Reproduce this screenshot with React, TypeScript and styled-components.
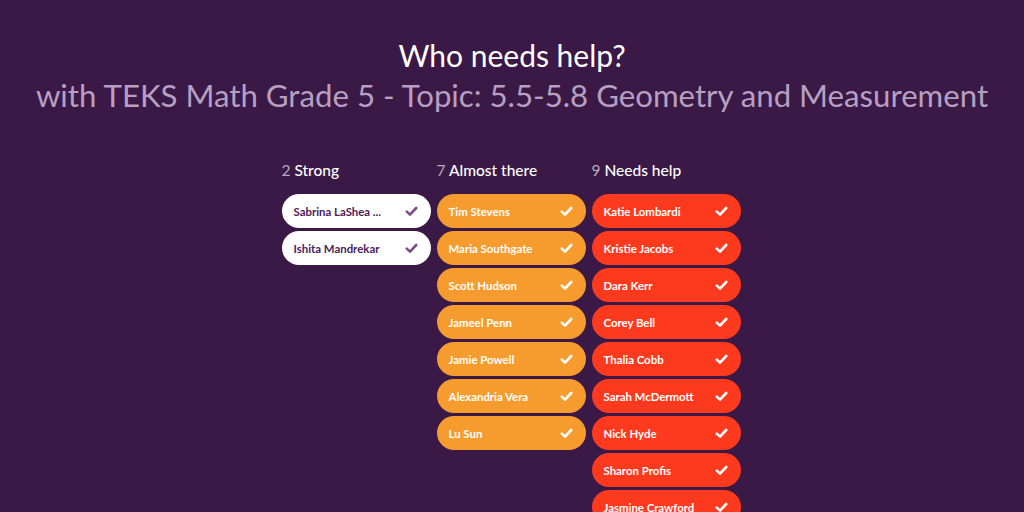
import * as React from "react";
import styled, { createGlobalStyle } from "styled-components";

type Level = "strong" | "almost" | "help";

interface Group {
  level: Level;
  label: string;
  students: string[];
}

const groups: Group[] = [
  {
    level: "strong",
    label: "Strong",
    students: ["Sabrina LaShea ...", "Ishita Mandrekar"],
  },
  {
    level: "almost",
    label: "Almost there",
    students: [
      "Tim Stevens",
      "Maria Southgate",
      "Scott Hudson",
      "Jameel Penn",
      "Jamie Powell",
      "Alexandria Vera",
      "Lu Sun",
    ],
  },
  {
    level: "help",
    label: "Needs help",
    students: [
      "Katie Lombardi",
      "Kristie Jacobs",
      "Dara Kerr",
      "Corey Bell",
      "Thalia Cobb",
      "Sarah McDermott",
      "Nick Hyde",
      "Sharon Profis",
      "Jasmine Crawford",
    ],
  },
];

const pillColors: Record<Level, { bg: string; fg: string; check: string }> = {
  strong: { bg: "#ffffff", fg: "#4e2159", check: "#7d4d8a" },
  almost: { bg: "#f69c2f", fg: "#ffffff", check: "#ffffff" },
  help: { bg: "#fd3a1e", fg: "#ffffff", check: "#ffffff" },
};

const CheckMark: React.FC<{ color: string }> = ({ color }) => (
  <svg width="13" height="11" viewBox="0 0 13 11" fill="none">
    <path
      d="M1.8 5.6 L5 8.6 L11.2 2"
      stroke={color}
      strokeWidth="2.6"
      strokeLinecap="round"
      strokeLinejoin="round"
    />
  </svg>
);

const App: React.FC = () => {
  return (
    <>
      <GlobalStyle />
      <Page>
        <Heading>
          <Title>Who needs help?</Title>
          <Subtitle>
            with TEKS Math Grade 5 - Topic: 5.5-5.8 Geometry and Measurement
          </Subtitle>
        </Heading>
        <Columns>
          {groups.map((g) => (
            <Column key={g.level}>
              <ColumnHeader>
                <Count>{g.students.length}</Count> {g.label}
              </ColumnHeader>
              <List>
                {g.students.map((name) => (
                  <Pill key={name} level={g.level}>
                    <Name>{name}</Name>
                    <CheckMark color={pillColors[g.level].check} />
                  </Pill>
                ))}
              </List>
            </Column>
          ))}
        </Columns>
      </Page>
    </>
  );
};

const GlobalStyle = createGlobalStyle`
  html, body {
    margin: 0;
    padding: 0;
    background: #3b1946;
    overflow: hidden;
  }
  body {
    font-family: Lato, "Open Sans", sans-serif;
  }
`;

const Page = styled.div`
  width: 1024px;
  height: 512px;
  overflow: hidden;
  background: #3b1946;
`;

const Heading = styled.div`
  display: grid;
  justify-items: center;
  padding-top: 36px;
`;

const Title = styled.h1`
  margin: 0;
  font-size: 30px;
  line-height: 38px;
  font-weight: 400;
  color: #ffffff;
`;

const Subtitle = styled.h2`
  margin: 0;
  font-size: 31.2px;
  line-height: 42px;
  font-weight: 400;
  color: #b79fc2;
  white-space: nowrap;
`;

const Columns = styled.div`
  display: flex;
  justify-content: center;
  gap: 6px;
  margin-top: 44px;
  padding-right: 2px;
`;

const Column = styled.div`
  width: 149px;
  display: flex;
  flex-direction: column;
`;

const ColumnHeader = styled.div`
  font-size: 15.5px;
  line-height: 20px;
  font-weight: 500;
  color: #ffffff;
  margin-bottom: 14px;
`;

const Count = styled.span`
  color: #b8a8c0;
  font-weight: 400;
`;

const List = styled.div`
  display: flex;
  flex-direction: column;
  gap: 3px;
`;

const Pill = styled.div<{ level: Level }>`
  height: 34px;
  border-radius: 17px;
  background: ${(p) => pillColors[p.level].bg};
  color: ${(p) => pillColors[p.level].fg};
  display: flex;
  align-items: center;
  justify-content: space-between;
  padding: 0 13px 0 12px;
  box-sizing: border-box;

  svg {
    flex: none;
    margin-left: 8px;
  }
`;

const Name = styled.span`
  font-size: 11.4px;
  font-weight: 700;
  white-space: nowrap;
`;

export default App;
